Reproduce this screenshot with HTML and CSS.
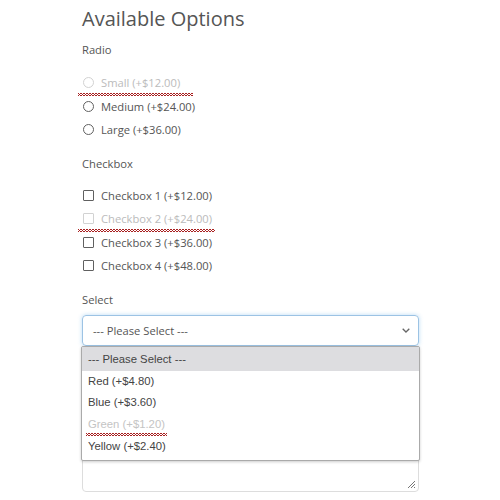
FILE: index.html
```html
<!DOCTYPE html>
<html lang="en">

<head>
    <meta http-equiv='Content-Type' content='text/html; charset=utf-8' />
    <meta name='viewport' content='width=device-width' />
    <title>Available Options</title>
    <link rel="stylesheet" href="styles.css">
</head>

<body>
    <div id="options">
        <h2 class="title">Available Options</h2>

        <div class="group">
            <div class="label">Radio</div>
            <div class="list first">
                <label class="item off spell"><input type="radio" name="size" disabled> Small (+$12.00)</label>
                <label class="item"><input type="radio" name="size"> Medium (+$24.00)</label>
                <label class="item"><input type="radio" name="size"> Large (+$36.00)</label>
            </div>
        </div>

        <div class="group">
            <div class="label">Checkbox</div>
            <div class="list">
                <label class="item"><input type="checkbox"> Checkbox 1 (+$12.00)</label>
                <label class="item off spell wide"><input type="checkbox" disabled> Checkbox 2 (+$24.00)</label>
                <label class="item"><input type="checkbox"> Checkbox 3 (+$36.00)</label>
                <label class="item"><input type="checkbox"> Checkbox 4 (+$48.00)</label>
            </div>
        </div>

        <div class="group">
            <div class="label">Select</div>
            <div class="select-wrap">
                <div class="select">
                    <span>--- Please Select ---</span>
                    <svg class="chev" width="8" height="5" viewBox="0 0 8 5"><path d="M0.7 0.7 L4 4 L7.3 0.7" fill="none" stroke="#666" stroke-width="1.3"/></svg>
                </div>
                <ul class="dropdown">
                    <li class="hl">--- Please Select ---</li>
                    <li>Red (+$4.80)</li>
                    <li>Blue (+$3.60)</li>
                    <li class="off"><span class="spell-text">Green (+$1.20)</span></li>
                    <li>Yellow (+$2.40)</li>
                </ul>
            </div>
        </div>

        <div class="group">
            <div class="label-space"></div>
            <div class="textarea">
                <svg class="grip" width="9" height="9" viewBox="0 0 9 9"><path d="M8 1 L1 8 M8 4 L4 8 M8 7 L7 8" stroke="#777" stroke-width="1"/></svg>
            </div>
        </div>
    </div>
</body>

</html>
```

FILE: styles.css
```css
body {
    margin: 0;
    background-color: #ffffff;
    font-family: "Open Sans", sans-serif;
    color: #555;
}

#options {
    width: 337px;
    padding: 7px 0 0 82px;
}

.title {
    margin: 0;
    font-size: 20px;
    line-height: 24px;
    font-weight: normal;
    color: #555;
}

.group {
    margin-top: 11px;
}

.group + .group {
    margin-top: 14px;
}

.label {
    font-size: 11.2px;
    line-height: 16px;
    color: #555;
}

.label-space {
    height: 16px;
}

.list {
    margin-top: 12px;
    display: flex;
    flex-direction: column;
}

.list.first {
    margin-top: 13px;
}

.item {
    position: relative;
    display: flex;
    align-items: center;
    gap: 4px;
    height: 23.5px;
    font-size: 11.2px;
    color: #555;
}

.item input {
    -webkit-appearance: none;
    appearance: none;
    margin: 0 3px 0 1px;
    width: 11px;
    height: 11px;
    border: 1.6px solid #606060;
    box-sizing: border-box;
    background: #fff;
}

.item input[type=radio] {
    border-radius: 50%;
}

.item input[type=checkbox] {
    border-radius: 1px;
}

.item.off {
    color: #bbb;
}

.item.off input {
    border-color: #d2d2d2;
}

.spell::after {
    content: "";
    position: absolute;
    left: -4px;
    bottom: -1px;
    width: 115px;
    height: 3px;
    background:
        linear-gradient(135deg, transparent 35%, #a82020 35%, #a82020 65%, transparent 65%) 0 0 / 3px 3px repeat-x,
        linear-gradient(45deg, transparent 35%, #a82020 35%, #a82020 65%, transparent 65%) 0 0 / 3px 3px repeat-x;
}

.spell.wide::after {
    width: 137px;
}

.select-wrap {
    position: relative;
    margin-top: 7px;
}

.select {
    height: 29px;
    border: 1px solid #9cc3e4;
    border-radius: 4px;
    box-shadow: 0 0 4px rgba(102, 175, 233, 0.45);
    display: flex;
    align-items: center;
    justify-content: space-between;
    padding: 0 8px 0 10px;
    font-size: 11.2px;
    color: #555;
}

.chev {
    display: block;
}

.dropdown {
    position: absolute;
    top: 31px;
    left: -1px;
    right: -1px;
    margin: 0;
    padding: 0 0 3px;
    list-style: none;
    background: #fff;
    border: 1px solid #aaa;
    border-radius: 2px;
    box-shadow: 0 1px 3px rgba(0, 0, 0, 0.2);
    font-family: "Liberation Sans", Arial, sans-serif;
    font-size: 11.3px;
    color: #444;
    z-index: 2;
}

.dropdown li {
    height: 21.7px;
    line-height: 21.7px;
    padding-left: 6px;
}

.dropdown li.hl {
    background: #dddde0;
    height: 24px;
    line-height: 24px;
}

.dropdown li.off {
    color: #c4c4c4;
}

.spell-text {
    position: relative;
}

.spell-text::after {
    content: "";
    position: absolute;
    left: -2px;
    right: -2px;
    bottom: -6px;
    height: 3px;
    background:
        linear-gradient(135deg, transparent 35%, #a82020 35%, #a82020 65%, transparent 65%) 0 0 / 3px 3px repeat-x,
        linear-gradient(45deg, transparent 35%, #a82020 35%, #a82020 65%, transparent 65%) 0 0 / 3px 3px repeat-x;
}

.textarea {
    position: relative;
    margin-top: 8px;
    height: 106px;
    border: 1px solid #ddd;
    border-radius: 4px;
}

.grip {
    position: absolute;
    right: 2px;
    bottom: 2px;
}
```
